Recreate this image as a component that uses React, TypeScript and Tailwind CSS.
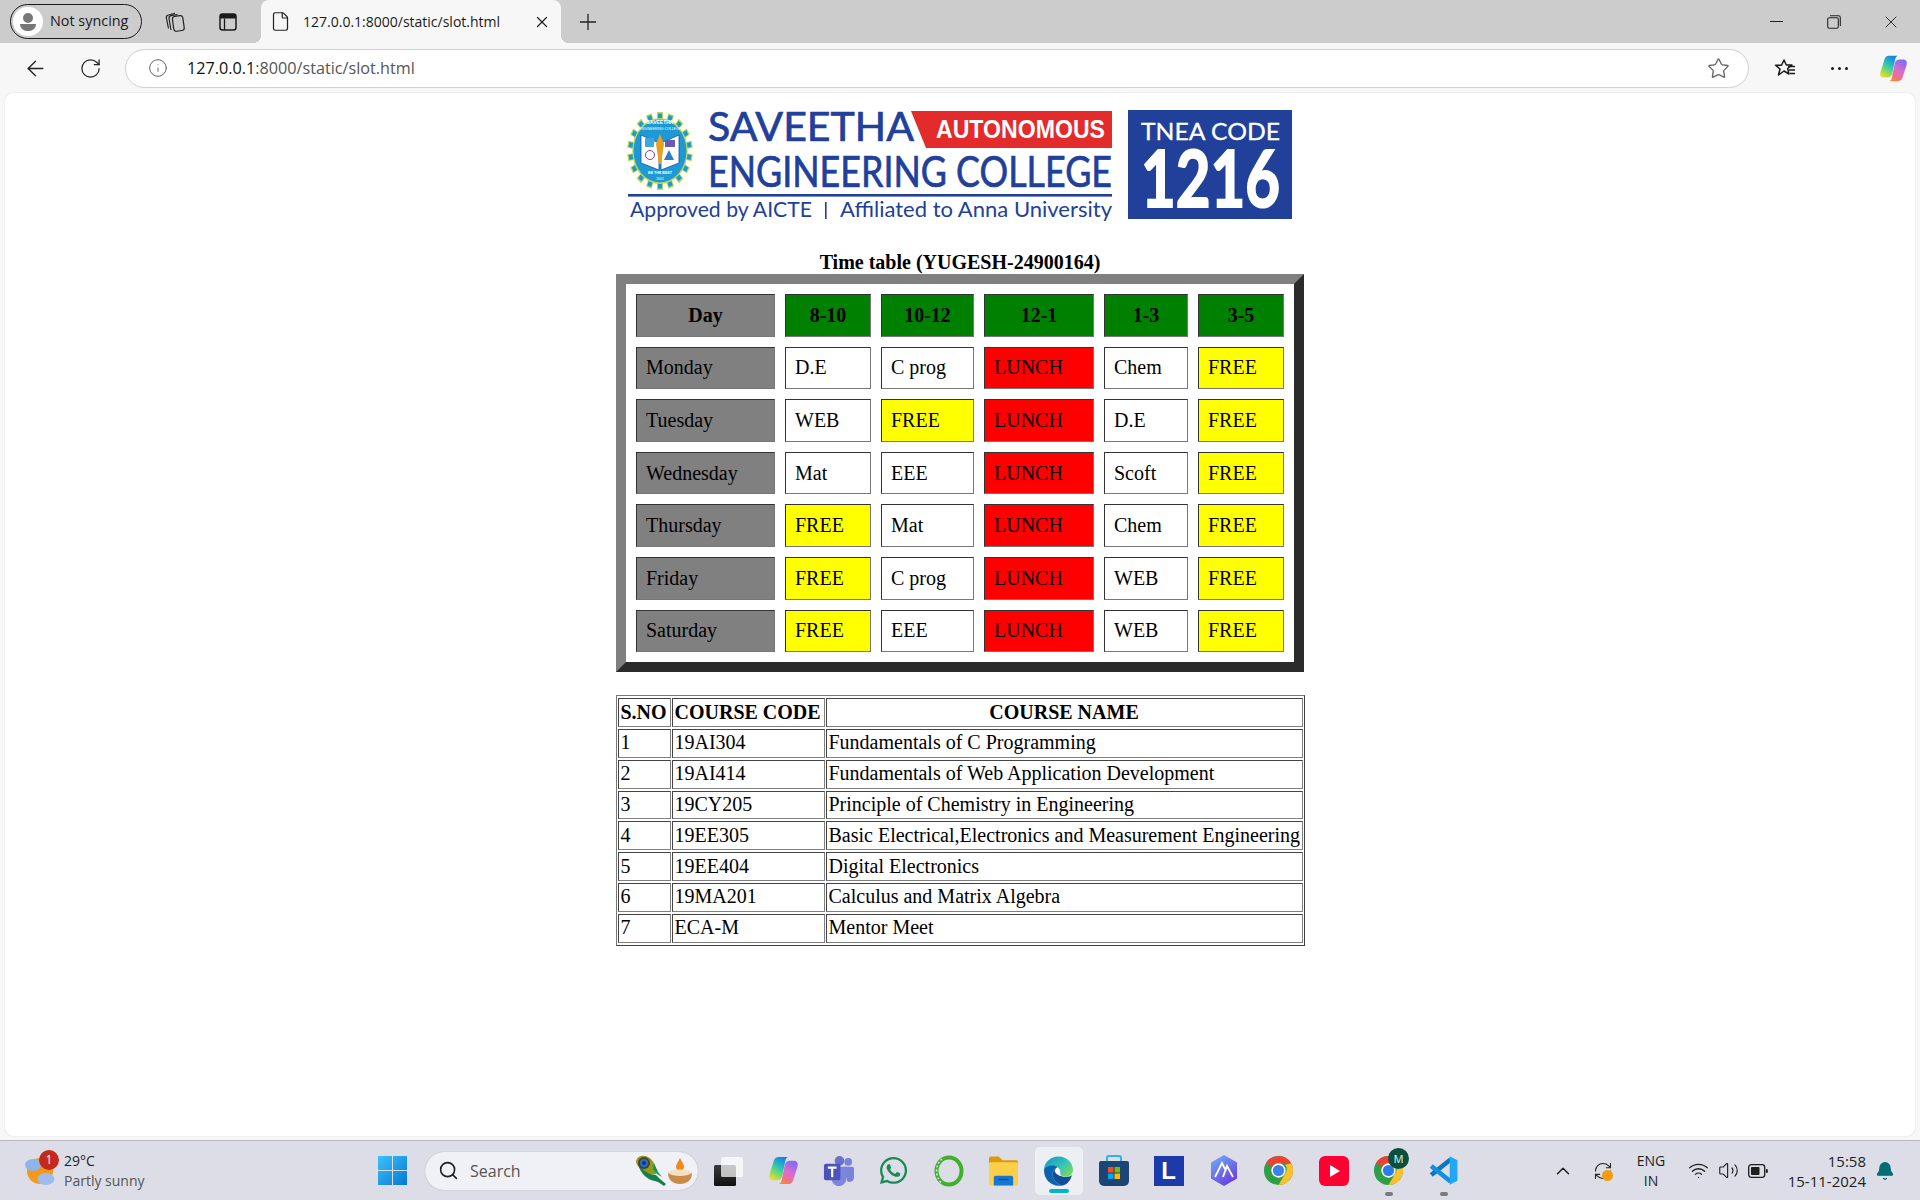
import {
  ArrowLeft,
  Bell,
  ChevronUp,
  File,
  Info,
  Plus,
  RefreshCw,
  RotateCw,
  Search,
  Star,
  Volume2,
  Wifi,
  X,
} from "lucide-react";
import { FaWhatsapp } from "react-icons/fa";

const timetable = [
  ["Monday", "D.E", "C prog", "LUNCH", "Chem", "FREE"],
  ["Tuesday", "WEB", "FREE", "LUNCH", "D.E", "FREE"],
  ["Wednesday", "Mat", "EEE", "LUNCH", "Scoft", "FREE"],
  ["Thursday", "FREE", "Mat", "LUNCH", "Chem", "FREE"],
  ["Friday", "FREE", "C prog", "LUNCH", "WEB", "FREE"],
  ["Saturday", "FREE", "EEE", "LUNCH", "WEB", "FREE"],
];

const courses = [
  ["1", "19AI304", "Fundamentals of C Programming"],
  ["2", "19AI414", "Fundamentals of Web Application Development"],
  ["3", "19CY205", "Principle of Chemistry in Engineering"],
  ["4", "19EE305", "Basic Electrical,Electronics and Measurement Engineering"],
  ["5", "19EE404", "Digital Electronics"],
  ["6", "19MA201", "Calculus and Matrix Algebra"],
  ["7", "ECA-M", "Mentor Meet"],
];

const slotCell =
  "h-[42.6px] border border-t-[#333333] border-l-[#333333] border-r-[#777777] border-b-[#777777] px-[9px] pt-0 pb-[1px] text-left font-normal";
const courseCell =
  "h-[28.8px] border border-t-[#444444] border-l-[#444444] border-r-[#808080] border-b-[#808080] px-[2px] pt-0 pb-[2px] text-left font-normal";

function slotColor(text: string) {
  if (text === "FREE") return "bg-[#ffff00]";
  if (text === "LUNCH") return "bg-[#ff0000]";
  return "bg-white";
}

function CopilotIcon({ id, size }: { id: string; size: number }) {
  return (
    <svg width={size} height={size} viewBox="0 0 24 24">
      <defs>
        <linearGradient id={id + "a"} x1="0.7" y1="0" x2="0.2" y2="1">
          <stop offset="0" stopColor="#1580ea" />
          <stop offset="0.45" stopColor="#2fc9b0" />
          <stop offset="0.8" stopColor="#a6dc4a" />
          <stop offset="1" stopColor="#f6d53a" />
        </linearGradient>
        <linearGradient id={id + "b"} x1="0.8" y1="0" x2="0.3" y2="1">
          <stop offset="0" stopColor="#7c6cf2" />
          <stop offset="0.5" stopColor="#d86bd2" />
          <stop offset="0.8" stopColor="#f0708a" />
          <stop offset="1" stopColor="#f78a38" />
        </linearGradient>
      </defs>
      <path
        d="M8 1.5H15.5C13.9 2 13.6 3.6 13.3 5L11 16C10.5 18.5 9 19.5 7 19.5H4C1.5 19.5 .4 17.5 1.2 15L4.5 4.5C5 2.8 6.4 1.5 8 1.5Z"
        fill={`url(#${id}a)`}
      />
      <path
        d="M16 22.5H8.5C10.1 22 10.4 20.4 10.7 19L13 8C13.5 5.5 15 4.5 17 4.5H20C22.5 4.5 23.6 6.5 22.8 9L19.5 19.5C19 21.2 17.6 22.5 16 22.5Z"
        fill={`url(#${id}b)`}
      />
    </svg>
  );
}

function ChromeIcon({ id }: { id: string }) {
  return (
    <svg width="31" height="31" viewBox="0 0 32 32">
      <circle cx="16" cy="16" r="15" fill="#2f9e44" />
      <path d="M16 1A15 15 0 0 1 29 8.5H16A7.5 7.5 0 0 0 9.5 12.3L3 8.5A15 15 0 0 1 16 1Z" fill="#ea4335" />
      <path d="M29 8.5A15 15 0 0 1 16 31L22.5 19.8A7.5 7.5 0 0 0 23 10Z" fill="#fbc02d" />
      <circle cx="16" cy="16" r="7.4" fill="white" />
      <circle cx="16" cy="16" r="5.8" fill={id === "profile" ? "#2a7de8" : "#3b82f0"} />
    </svg>
  );
}

function EdgeIcon() {
  return (
    <svg width="31" height="32" viewBox="0 0 32 32">
      <defs>
        <linearGradient id="edgeTop" x1="0" y1="0" x2="1" y2="0.8">
          <stop offset="0" stopColor="#1392c9" />
          <stop offset="0.6" stopColor="#35c4b4" />
          <stop offset="1" stopColor="#7ddc5c" />
        </linearGradient>
      </defs>
      <path d="M1 15C1 7 8 1 16 1C25 1 31 8 31 15C31 20 27 22 23 22C19 22 17 20 18 17C15 12 5 10 1 15Z" fill="url(#edgeTop)" />
      <path d="M1 15C3 10 11 9 15 12C11 13 9 17 10 21C11 26 15 30 20 31C9 33 1 25 1 15Z" fill="#0a62b0" />
      <path d="M10 21C9 17 11 13 15 12C17 13 18 15 18 17C17 21 20 23 25 22C27 21.8 29 21 30 20C28 27 24 30 20 31C15 30 11 26 10 21Z" fill="#0f4f98" />
      <path d="M15 12C17 13 18 15 18 17C17.5 19 18 20.5 20 21.5C16 21 13 19 12 16C12.4 14 13.5 12.6 15 12Z" fill="#ffffff" />
    </svg>
  );
}

function SaveethaLogo() {
  const teeth = Array.from({ length: 18 }, (_, i) => i * 20);
  return (
    <svg width="664" height="109" viewBox="0 0 664 109" className="block overflow-visible">
      <g transform="translate(32 41) scale(0.84 1)">
        {teeth.map((deg) => (
          <rect key={deg} x="-3.5" y="-39" width="7" height="8" fill="#c4d84e" transform={`rotate(${deg})`} />
        ))}
        {teeth.map((deg) => (
          <rect key={deg} x="-2.5" y="-37.5" width="5" height="8" fill="#1d9ad6" transform={`rotate(${deg})`} />
        ))}
        <circle r="33" fill="#c4d84e" />
        <circle r="31.5" fill="#1d9ad6" />
      </g>
      <text x="32" y="14" fontSize="5" fontWeight="700" fill="#ffffff" textAnchor="middle" fontFamily="Liberation Sans, sans-serif">
        SAVEETHA
      </text>
      <text x="32" y="20" fontSize="3.5" fill="#ffffff" textAnchor="middle" fontFamily="Liberation Sans, sans-serif">
        ENGINEERING COLLEGE
      </text>
      <path d="M13 25L31 33V60L13 53Z" fill="#ffffff" stroke="#1b4f9c" strokeWidth="0.8" />
      <path d="M51 25L33 33V60L51 53Z" fill="#ffffff" stroke="#1b4f9c" strokeWidth="0.8" />
      <rect x="17" y="28" width="9" height="9" rx="1" fill="#3fa6e0" />
      <rect x="37" y="30" width="10" height="7" fill="#6a58b8" />
      <circle cx="22" cy="45" r="4.5" fill="none" stroke="#7a3fa0" strokeWidth="1" />
      <path d="M41 40L46 50H36Z" fill="#2c7fc4" />
      <path d="M32 24L36 34L33 54H31L28 34Z" fill="#e6a21f" />
      <text x="32" y="64" fontSize="3.6" fontWeight="700" fill="#ffffff" textAnchor="middle" fontFamily="Liberation Sans, sans-serif">
        BE THE BEST
      </text>
      <text x="32" y="70" fontSize="3.4" fill="#ffffff" textAnchor="middle" fontFamily="Liberation Sans, sans-serif">
        2001
      </text>

      <text x="80" y="31" fontSize="40" textLength="206" lengthAdjust="spacingAndGlyphs" fill="#21409a" stroke="#21409a" strokeWidth="0.7" fontFamily="Lato, sans-serif">
        SAVEETHA
      </text>
      <path d="M283 1H484V38H298Z" fill="#e32b2b" />
      <text x="308" y="28" fontSize="25" fontWeight="700" textLength="169" lengthAdjust="spacingAndGlyphs" fill="#ffffff" fontFamily="Liberation Sans, sans-serif">
        AUTONOMOUS
      </text>
      <text x="80" y="77" fontSize="42" textLength="404" lengthAdjust="spacingAndGlyphs" fill="#21409a" stroke="#21409a" strokeWidth="0.7" fontFamily="Lato, sans-serif">
        ENGINEERING COLLEGE
      </text>
      <rect x="0" y="84" width="484" height="2.6" fill="#21409a" />
      <text x="2" y="107" fontSize="21" textLength="182" lengthAdjust="spacingAndGlyphs" fill="#21409a" fontFamily="Lato, sans-serif">
        Approved by AICTE
      </text>
      <rect x="197" y="92" width="1.6" height="17" fill="#21409a" />
      <text x="212" y="107" fontSize="21" textLength="272" lengthAdjust="spacingAndGlyphs" fill="#21409a" fontFamily="Lato, sans-serif">
        Affiliated to Anna University
      </text>

      <rect x="500" y="0" width="164" height="109" fill="#21409a" />
      <text x="513" y="30" fontSize="24" textLength="139" lengthAdjust="spacingAndGlyphs" fill="#ffffff" stroke="#ffffff" strokeWidth="0.3" fontFamily="Lato, sans-serif">
        TNEA CODE
      </text>
      <text x="513" y="97" fontSize="78" fontWeight="700" textLength="139" lengthAdjust="spacingAndGlyphs" fill="#ffffff" stroke="#ffffff" strokeWidth="2" fontFamily="Lato, sans-serif">
        1216
      </text>
    </svg>
  );
}

function TabStrip() {
  return (
    <div className="flex h-[43px] shrink-0 items-center bg-[#cccccc] font-['Open_Sans',sans-serif] text-[#1a1a1a]">
      <div className="ml-[10px] flex h-[35px] w-[132px] items-center rounded-full border border-[#1a1a1a] pl-[2px]">
        <div className="flex h-[29px] w-[30px] flex-col items-center justify-center rounded-full bg-white">
          <span className="h-[10px] w-[10px] rounded-full bg-[#777777]" />
          <span className="mt-[1px] h-[7px] w-[16px] rounded-b-full rounded-t-sm bg-[#777777]" />
        </div>
        <span className="ml-[7px] text-[14.4px] leading-none">Not syncing</span>
      </div>
      <div className="ml-[13px] flex w-[40px] justify-center">
        <svg width="22" height="22" viewBox="0 0 22 22" fill="none" stroke="#222222" strokeWidth="1.2">
          <rect x="9" y="5" width="10.5" height="15" rx="2.5" transform="rotate(-8 14 12)" />
          <path d="M7 19L5 7.5C4.8 6 5.6 5 7 4.7L13.5 3.5" />
          <path d="M4.5 17.5L2.4 7C2.1 5.4 2.9 4.3 4.4 4L11 2.4" />
        </svg>
      </div>
      <div className="ml-[13px] flex w-[40px] justify-center">
        <svg width="18" height="18" viewBox="0 0 18 18" fill="none">
          <rect x="1" y="1" width="16" height="16" rx="2.5" stroke="#1a1a1a" strokeWidth="1.5" />
          <path d="M1 3.5A2.5 2.5 0 0 1 3.5 1H14.5A2.5 2.5 0 0 1 17 3.5V5.5H1Z" fill="#1a1a1a" />
          <path d="M5.5 5.5V17" stroke="#1a1a1a" strokeWidth="1.3" />
        </svg>
      </div>
      <div className="relative ml-[13px] flex h-full w-[300px] items-center rounded-t-lg bg-[#f7f7f7]">
        <span className="absolute bottom-0 left-[-8px] h-[8px] w-[8px] bg-[radial-gradient(circle_at_0_0,transparent_8px,#f7f7f7_8px)]" />
        <span className="absolute bottom-0 right-[-8px] h-[8px] w-[8px] bg-[radial-gradient(circle_at_100%_0,transparent_8px,#f7f7f7_8px)]" />
        <File className="ml-[9px] h-[21px] w-[21px] text-[#222222]" strokeWidth={1.4} />
        <span className="ml-[12px] text-[14px] leading-none">127.0.0.1:8000/static/slot.html</span>
        <X className="ml-auto mr-[10px] h-[18px] w-[18px] text-[#222222]" strokeWidth={1.7} />
      </div>
      <div className="ml-[7px] flex w-[40px] justify-center">
        <Plus className="h-[26px] w-[26px] text-[#222222]" strokeWidth={1.2} />
      </div>
      <div className="ml-auto flex items-center">
        <div className="flex w-[57px] justify-center">
          <span className="h-[1.5px] w-[13px] bg-[#222222]" />
        </div>
        <div className="flex w-[57px] justify-center">
          <svg width="14" height="14" viewBox="0 0 14 14" fill="none" stroke="#222222" strokeWidth="1.1">
            <rect x="0.7" y="2.7" width="10.6" height="10.6" rx="1.5" />
            <path d="M3 0.7H11.5A1.8 1.8 0 0 1 13.3 2.5V11" />
          </svg>
        </div>
        <div className="flex w-[58px] justify-center">
          <X className="h-[20px] w-[20px] text-[#222222]" strokeWidth={1.1} />
        </div>
      </div>
    </div>
  );
}

function Toolbar() {
  return (
    <div className="flex h-[50px] shrink-0 items-center bg-[#f7f7f7] font-['Open_Sans',sans-serif]">
      <div className="ml-[15px] flex w-[40px] justify-center">
        <ArrowLeft className="h-[25px] w-[25px] text-[#222222]" strokeWidth={1.3} />
      </div>
      <div className="ml-[15px] flex w-[40px] justify-center">
        <RotateCw className="h-[23px] w-[23px] text-[#222222]" strokeWidth={1.3} />
      </div>
      <div className="ml-[15px] flex h-[39px] w-[1624px] items-center rounded-full border border-[#d0d0d0] bg-white pl-[22px] pr-[18px]">
        <Info className="h-[20px] w-[20px] text-[#666666]" strokeWidth={1.2} />
        <span className="ml-[19px] text-[16.2px] leading-none text-[#555555]">
          <span className="text-[#111111]">127.0.0.1</span>:8000/static/slot.html
        </span>
        <Star className="ml-auto h-[23px] w-[23px] text-[#666666]" strokeWidth={1.4} />
      </div>
      <div className="ml-[16px] flex w-[40px] justify-center">
        <svg width="22" height="20" viewBox="0 0 22 20" fill="none" stroke="#1a1a1a" strokeWidth="1.5" strokeLinejoin="round">
          <path d="M10 2L12.3 7H18L13.6 10.5L15 16L10 13L4.5 17L6 11L1.5 7.2H7.5Z" />
          <path d="M14 8.5H21M15 12H21M16 15.5H21" />
        </svg>
      </div>
      <div className="ml-[14px] flex w-[40px] justify-center gap-[4px]">
        <span className="h-[3px] w-[3px] rounded-full bg-[#1a1a1a]" />
        <span className="h-[3px] w-[3px] rounded-full bg-[#1a1a1a]" />
        <span className="h-[3px] w-[3px] rounded-full bg-[#1a1a1a]" />
      </div>
      <div className="ml-[14px] flex w-[40px] justify-center">
        <CopilotIcon id="copilotTop" size={29} />
      </div>
    </div>
  );
}

function Timetable() {
  const head = ["Day", "8-10", "10-12", "12-1", "1-3", "3-5"];
  const widths = ["w-[139px]", "w-[86px]", "w-[93px]", "w-[110px]", "w-[84px]", "w-[86px]"];
  return (
    <table className="mt-[33px] w-[688px] table-fixed border-separate border-spacing-[10px] border-[10px] border-t-[#808080] border-l-[#808080] border-r-[#2b2b2b] border-b-[#2b2b2b] text-[20px] leading-[22px]">
      <caption className="h-[22px] font-bold leading-[20px]">Time table (YUGESH-24900164)</caption>
      <thead>
        <tr>
          {head.map((h, i) => (
            <th
              key={h}
              className={`${widths[i]} h-[42.6px] border border-t-[#333333] border-l-[#333333] border-r-[#777777] border-b-[#777777] p-0 text-center font-bold ${
                i === 0 ? "bg-[#808080]" : "bg-[#008000]"
              }`}
            >
              {h}
            </th>
          ))}
        </tr>
      </thead>
      <tbody>
        {timetable.map((row) => (
          <tr key={row[0]}>
            {row.map((cell, i) => (
              <td key={i} className={`${slotCell} ${i === 0 ? "bg-[#808080]" : slotColor(cell)}`}>
                {cell}
              </td>
            ))}
          </tr>
        ))}
      </tbody>
    </table>
  );
}

function CourseTable() {
  return (
    <table className="mt-[23px] w-[689px] table-fixed border-separate border-spacing-x-[1px] border-spacing-y-[2px] border border-t-[#777777] border-l-[#777777] border-r-[#444444] border-b-[#444444] text-[20px] leading-[22px]">
      <thead>
        <tr>
          <th className={`${courseCell} w-[53px] !font-bold`}>S.NO</th>
          <th className={`${courseCell} w-[153px] !font-bold`}>COURSE CODE</th>
          <th className={`${courseCell} !text-center !font-bold`}>COURSE NAME</th>
        </tr>
      </thead>
      <tbody>
        {courses.map((row) => (
          <tr key={row[0]}>
            {row.map((cell, i) => (
              <td key={i} className={`${courseCell} whitespace-nowrap`}>
                {cell}
              </td>
            ))}
          </tr>
        ))}
      </tbody>
    </table>
  );
}

function WeatherIcon() {
  return (
    <div className="relative h-[30px] w-[30px]">
      <svg width="30" height="30" viewBox="0 0 30 30">
        <circle cx="15" cy="15" r="13" fill="#f39a1e" />
        <ellipse cx="8" cy="9" rx="8" ry="6" fill="#8fb4ea" />
        <ellipse cx="21" cy="23" rx="8.5" ry="6" fill="#9dbdf0" />
      </svg>
      <span className="absolute left-[14px] top-[-6px] flex h-[20px] w-[20px] items-center justify-center rounded-full bg-[#c42b1c] text-[12px] leading-none text-white">
        1
      </span>
    </div>
  );
}

function PeacockFeather() {
  return (
    <svg width="32" height="31" viewBox="0 0 32 31">
      <path d="M1 7C1 2 7 -1 13 2C19 5 21 12 21 19C14 21 3 15 1 7Z" fill="#8f9c1c" />
      <path d="M3 8C6 14 13 20 21 20L25 24L31 29L29 31L23 27L16 25C9 22 4 15 3 8Z" fill="#14804a" />
      <path d="M19 8L23 17L27 22L22 19L18 14Z" fill="#1a9455" />
      <ellipse cx="9" cy="8" rx="6" ry="6" fill="#5a3a1a" />
      <ellipse cx="9" cy="8" rx="4.2" ry="4.2" fill="#1c6fd0" />
      <circle cx="9" cy="8" r="1.8" fill="#0c2a66" />
    </svg>
  );
}

function Diya() {
  return (
    <svg width="26" height="28" viewBox="0 0 26 28">
      <path d="M13 1C15 5 17 7 17 10C17 12 15 14 13 14C11 14 9 12 9 10C9 7 11 5 13 1Z" fill="#f08a1d" />
      <ellipse cx="13" cy="16" rx="12" ry="3.5" fill="#f2e0c0" />
      <path d="M1 16C1 23 6 27 13 27C20 27 25 23 25 16C20 20 6 20 1 16Z" fill="#c98a4a" />
    </svg>
  );
}

function TaskView() {
  return (
    <svg width="30" height="30" viewBox="0 0 30 30">
      <defs>
        <linearGradient id="taskDark" x1="0" y1="0" x2="0" y2="1">
          <stop offset="0" stopColor="#3a3a3a" />
          <stop offset="1" stopColor="#111111" />
        </linearGradient>
      </defs>
      <rect x="1" y="9" width="22" height="21" rx="1.5" fill="url(#taskDark)" />
      <rect x="8" y="1" width="22" height="20" rx="1.5" fill="#ffffff" fillOpacity="0.72" />
    </svg>
  );
}

function TeamsIcon() {
  return (
    <svg width="31" height="31" viewBox="0 0 32 32">
      <circle cx="26" cy="7" r="4" fill="#7b83d8" />
      <circle cx="17" cy="6" r="5" fill="#6a72cc" />
      <path d="M21 12H30A2 2 0 0 1 32 14V23C32 27 28 29 25 27Z" fill="#7b83d8" />
      <path d="M9 12H24V25C24 29 20 32 16.5 32C12.5 32 9 29 9 25Z" fill="#7d86dc" />
      <rect x="1" y="9" width="17" height="17" rx="2" fill="#4b53bc" />
      <path d="M5 13H14M9.5 13V23" stroke="#ffffff" strokeWidth="2.2" />
    </svg>
  );
}

function FolderIcon() {
  return (
    <svg width="31" height="30" viewBox="0 0 32 30">
      <path d="M1 2A2 2 0 0 1 3 0H11L15 4H29A2 2 0 0 1 31 6V12H1Z" fill="#d99a0b" />
      <rect x="1" y="6" width="30" height="24" rx="1.5" fill="#fbcf48" />
      <path d="M6 30V22A2 2 0 0 1 8 20H24A2 2 0 0 1 26 22V30Z" fill="#1577d1" />
      <rect x="11" y="23" width="10" height="1.5" fill="#0b4f96" />
    </svg>
  );
}

function StoreIcon() {
  return (
    <svg width="30" height="31" viewBox="0 0 30 31">
      <path d="M8 7V3A2 2 0 0 1 10 1H20A2 2 0 0 1 22 3V7" fill="none" stroke="#2bb5f0" strokeWidth="2" />
      <path d="M0 8A2 2 0 0 1 2 6H28A2 2 0 0 1 30 8V26A5 5 0 0 1 25 31H5A5 5 0 0 1 0 26Z" fill="#1c4474" />
      <rect x="9" y="12" width="5.5" height="5.5" fill="#f25022" />
      <rect x="15.5" y="12" width="5.5" height="5.5" fill="#7fba00" />
      <rect x="9" y="18.5" width="5.5" height="5.5" fill="#00a4ef" />
      <rect x="15.5" y="18.5" width="5.5" height="5.5" fill="#ffb900" />
    </svg>
  );
}

function HexIcon() {
  return (
    <svg width="30" height="31" viewBox="0 0 30 31">
      <defs>
        <linearGradient id="hexFill" x1="0" y1="0" x2="0.6" y2="1">
          <stop offset="0" stopColor="#6fb4f5" />
          <stop offset="1" stopColor="#6b3fe0" />
        </linearGradient>
      </defs>
      <path d="M15 0L28 7.5V23.5L15 31L2 23.5V7.5Z" fill="url(#hexFill)" />
      <path d="M6 22L13 8L17 16M14 22L18 11L24 22" fill="none" stroke="#ffffff" strokeWidth="1.8" />
    </svg>
  );
}

function VsCodeIcon() {
  return (
    <svg width="31" height="31" viewBox="0 0 24 24">
      <path d="M17.5 3.5L2.5 15.5" stroke="#0b76c2" strokeWidth="3.6" />
      <path d="M2.5 8.5L17.5 20.5" stroke="#0f90e0" strokeWidth="3.6" />
      <path d="M16.8 1L22.8 4V20L16.8 23Z" fill="#22a8f2" />
    </svg>
  );
}

function TaskItem({ children, width = "w-[55px]" }: { children: React.ReactNode; width?: string }) {
  return <div className={`flex h-full items-center justify-center ${width}`}>{children}</div>;
}

function Taskbar() {
  return (
    <div className="flex h-[60px] shrink-0 items-center border-t border-[#b8b8bc] bg-[#dcdde6] font-['Open_Sans',sans-serif] text-[#1f1f1f]">
      <div className="flex w-[378px] shrink-0 items-center pl-[25px]">
        <WeatherIcon />
        <div className="ml-[9px] flex flex-col gap-[4px] text-[14px] leading-[16px]">
          <span>29°C</span>
          <span className="text-[#555555]">Partly sunny</span>
        </div>
      </div>
      <svg width="29" height="29" viewBox="0 0 29 29" className="shrink-0">
        <defs>
          <linearGradient id="winLogo" x1="0" y1="0" x2="1" y2="1">
            <stop offset="0" stopColor="#3cc2fb" />
            <stop offset="1" stopColor="#0478d4" />
          </linearGradient>
        </defs>
        <path d="M0 0H14V14H0ZM15 0H29V14H15ZM0 15H14V29H0ZM15 15H29V29H15Z" fill="url(#winLogo)" />
      </svg>
      <div className="ml-[18px] flex h-[38px] w-[273px] shrink-0 items-center rounded-full bg-[#f0f1f6] pl-[13px] pr-[5px] shadow-[0_0_1px_#999999]">
        <Search className="h-[21px] w-[21px] text-[#1f1f1f]" strokeWidth={1.8} />
        <span className="ml-[11px] text-[16px] leading-none text-[#555555]">Search</span>
        <div className="ml-auto flex items-center">
          <PeacockFeather />
          <Diya />
        </div>
      </div>
      <div className="ml-[1px] flex h-full shrink-0 items-center">
        <TaskItem width="w-[57px]">
          <TaskView />
        </TaskItem>
        <TaskItem>
          <CopilotIcon id="copilotBar" size={31} />
        </TaskItem>
        <TaskItem>
          <TeamsIcon />
        </TaskItem>
        <TaskItem>
          <FaWhatsapp className="h-[31px] w-[31px] text-[#1a8a55]" />
        </TaskItem>
        <TaskItem>
          <svg width="30" height="32" viewBox="0 0 30 32" fill="none">
            <ellipse cx="15" cy="16" rx="12.5" ry="13.5" stroke="#3eb02c" strokeWidth="4" />
            <path d="M8 4C3 8 2 14 3 20C4 24 6 27 8 28" stroke="#dcdde6" strokeWidth="1.6" strokeDasharray="2 2" />
          </svg>
        </TaskItem>
        <TaskItem>
          <FolderIcon />
        </TaskItem>
        <TaskItem>
          <div className="relative flex h-[48px] w-[48px] items-center justify-center rounded-[5px] bg-[#eeeff5]">
            <EdgeIcon />
            <span className="absolute bottom-[2px] h-[4px] w-[20px] rounded-full bg-[#00b7c3]" />
          </div>
        </TaskItem>
        <TaskItem>
          <StoreIcon />
        </TaskItem>
        <TaskItem>
          <div className="flex h-[30px] w-[30px] items-center justify-center bg-[#1c3aa9] font-['Liberation_Sans',sans-serif] text-[24px] font-bold leading-none text-white">
            L
          </div>
        </TaskItem>
        <TaskItem>
          <HexIcon />
        </TaskItem>
        <TaskItem>
          <ChromeIcon id="plain" />
        </TaskItem>
        <TaskItem>
          <div className="flex h-[30px] w-[30px] items-center justify-center rounded-[6px] bg-[#ff0033]">
            <span className="ml-[2px] h-0 w-0 border-y-[6px] border-l-[10px] border-y-transparent border-l-white" />
          </div>
        </TaskItem>
        <TaskItem>
          <div className="relative flex h-full items-center justify-center">
            <ChromeIcon id="profile" />
            <span className="absolute left-[15px] top-[7px] flex h-[21px] w-[21px] items-center justify-center rounded-full bg-[#0d4f3c] text-[11px] font-semibold leading-none text-[#b8d8cc]">
              M
            </span>
            <span className="absolute bottom-[4px] h-[4px] w-[8px] rounded-full bg-[#7a7a7a]" />
          </div>
        </TaskItem>
        <TaskItem>
          <div className="relative flex h-full items-center justify-center">
            <VsCodeIcon />
            <span className="absolute bottom-[4px] h-[4px] w-[8px] rounded-full bg-[#7a7a7a]" />
          </div>
        </TaskItem>
      </div>
      <div className="ml-auto flex shrink-0 items-center pr-[16px]">
        <div className="flex w-[30px] justify-center">
          <ChevronUp className="h-[22px] w-[22px] text-[#1f1f1f]" strokeWidth={1.6} />
        </div>
        <div className="relative flex w-[50px] justify-center">
          <RefreshCw className="h-[20px] w-[20px] text-[#222222]" strokeWidth={1.3} />
          <span className="absolute left-[24px] top-[9px] h-[11px] w-[11px] rounded-full bg-[#f59b0c]" />
        </div>
        <div className="flex w-[46px] flex-col items-center gap-[4px] text-[14px] leading-[16px]">
          <span>ENG</span>
          <span>IN</span>
        </div>
        <div className="ml-[9px] flex w-[30px] justify-center">
          <Wifi className="h-[21px] w-[21px] text-[#1f1f1f]" strokeWidth={1.5} />
        </div>
        <div className="flex w-[30px] justify-center">
          <Volume2 className="h-[21px] w-[21px] text-[#1f1f1f]" strokeWidth={1.3} />
        </div>
        <div className="flex w-[30px] justify-center">
          <svg width="20" height="14" viewBox="0 0 20 14" fill="none">
            <rect x="0.7" y="0.7" width="16" height="12.6" rx="2.5" stroke="#1f1f1f" strokeWidth="1.3" />
            <rect x="3" y="3" width="8.5" height="8" rx="1" fill="#1f1f1f" />
            <rect x="17.8" y="5" width="2" height="4" rx="1" fill="#1f1f1f" />
          </svg>
        </div>
        <div className="flex w-[93px] flex-col items-end gap-[4px] text-[15px] leading-[16px]">
          <span>15:58</span>
          <span>15-11-2024</span>
        </div>
        <div className="flex w-[38px] justify-center">
          <Bell className="h-[20px] w-[20px] fill-[#006d77] text-[#006d77]" strokeWidth={1.5} />
        </div>
      </div>
    </div>
  );
}

export default function App() {
  return (
    <div className="flex h-[1200px] w-[1920px] flex-col overflow-hidden bg-[#f7f7f7]">
      <TabStrip />
      <Toolbar />
      <div className="flex min-h-0 flex-1 px-[5px] pb-[4px]">
        <div className="flex flex-1 flex-col items-center rounded-lg bg-white pt-[17px] font-['Liberation_Serif',serif] text-black shadow-[0_0_1px_#bbbbbb]">
          <SaveethaLogo />
          <Timetable />
          <CourseTable />
        </div>
      </div>
      <Taskbar />
    </div>
  );
}
